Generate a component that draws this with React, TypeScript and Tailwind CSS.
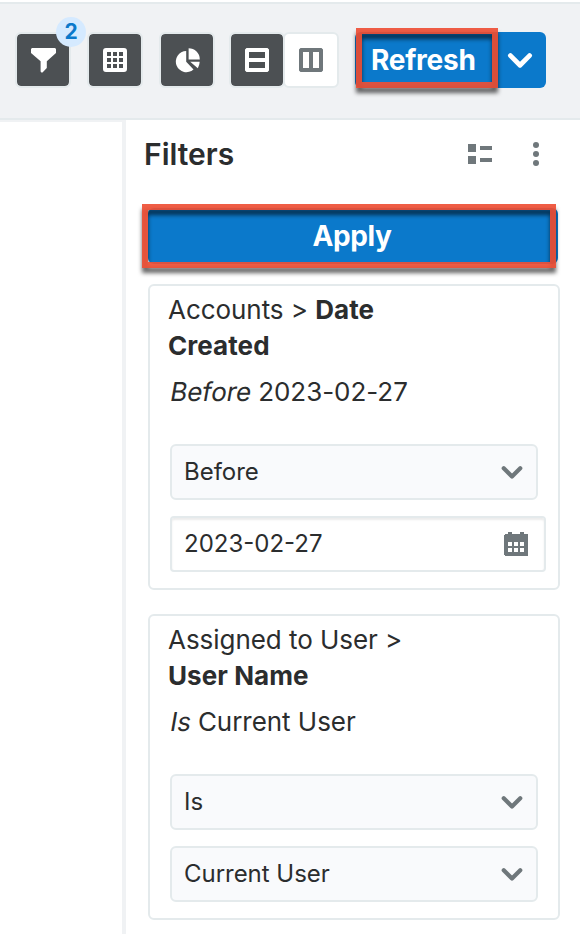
import type { ReactNode } from "react";

function Chevron({ className }: { className: string }) {
  return (
    <svg viewBox="0 0 24 16" className={className} fill="none" stroke="currentColor" strokeWidth="4.6" strokeLinecap="round" strokeLinejoin="round">
      <path d="M3 3.4 12 12.4 21 3.4" />
    </svg>
  );
}

function ToolButton({ light, children }: { light?: boolean; children: ReactNode }) {
  return (
    <button
      className={
        "relative flex size-14 shrink-0 items-center justify-center rounded-md border-2 border-[#e4eaec] " +
        (light ? "bg-white text-[#6f777b]" : "bg-[#4c5053] bg-clip-padding text-white")
      }
    >
      {children}
    </button>
  );
}

function Highlight({ className }: { className: string }) {
  return (
    <span
      className={
        "pointer-events-none absolute border-6 border-[#ee4f35]/92 drop-shadow-[0_5px_2px_rgba(0,0,0,0.65)] " + className
      }
    />
  );
}

function Select({ value }: { value: string }) {
  return (
    <div className="flex h-14 w-[368px] items-center justify-between rounded-md border-2 border-[#e4eaec] bg-[#f9fafc] pr-[13px] pl-3">
      <span className="text-[24px] leading-9 tracking-[-0.03px]">{value}</span>
      <Chevron className="h-[15px] w-[22px] text-[#6f777b]" />
    </div>
  );
}

function DateInput({ value }: { value: string }) {
  return (
    <div className="flex h-14 w-[376px] items-center justify-between rounded-[4px] border-2 border-[#e4eaec] bg-white pr-4 pl-3 shadow-[inset_0_2px_2px_rgba(0,0,0,0.08)]">
      <span className="text-[24px] leading-9">{value}</span>
      <svg viewBox="0 0 24 24" className="size-6" fill="#6f777b" shapeRendering="crispEdges">
        <path
          fillRule="evenodd"
          d="M1 2H4V0H8V2H16V0H20V2H23L24 3V23L23 24H1L0 23V3ZM4 10V14H8V10ZM10 10V14H14V10ZM16 10V14H20V10ZM4 16V20H8V16ZM10 16V20H14V16ZM16 16V20H20V16Z"
        />
      </svg>
    </div>
  );
}

function FilterCard({ path, field, operator, value, children }: {
  path: string;
  field: string;
  operator: string;
  value: string;
  children: ReactNode;
}) {
  return (
    <section className="h-[306px] w-[412px] rounded-md border-2 border-[#e4eaec] bg-white pt-[6px] pl-[18px]">
      <h3 className="w-[240px] text-[26px] leading-9 tracking-[-0.05px]">
        {`${path} > `}
        <b className="font-bold tracking-[0.06px]">{field}</b>
      </h3>
      <p className="mt-[10px] ml-[2px] text-[26px] leading-9 tracking-[-0.04px]">
        <em className="-ml-px mr-px inline-block origin-[0_75%] -skew-x-[10deg] not-italic">{operator}</em>
        {` ${value}`}
      </p>
      <div className="mt-[34px] ml-[2px] flex flex-col gap-4">{children}</div>
    </section>
  );
}

export default function App() {
  return (
    <div className="flex h-[934px] w-[580px] flex-col overflow-hidden bg-white pt-[2px] font-['Inter','Liberation_Sans',sans-serif] text-[#2b2d2e]">
      <header className="flex h-[118px] shrink-0 items-start border-y-2 border-[#e4eaec] bg-[#f0f2f4] pt-7 pl-[15px]">
        <div className="flex gap-4">
          <div className="relative">
            <ToolButton>
              <svg viewBox="0 0 25 25" className="size-[25px]" fill="currentColor">
                <path d="M1 0H24L25 1V5L15.8 13.2V20L11.5 24.4H10.4L9.6 23.6V13.2L0 5V1Z" />
              </svg>
            </ToolButton>
            <span className="absolute -top-[15px] left-[41px] flex size-[30px] items-center justify-center rounded-full bg-[#d5eaff] text-[21px] font-bold text-[#0b79cb]">
              2
            </span>
          </div>
          <ToolButton>
            <svg viewBox="0 0 24 24" className="size-6" fill="currentColor">
              <path
                fillRule="evenodd"
                d="M3 0H21Q24 0 24 3V21Q24 24 21 24H3Q0 24 0 21V3Q0 0 3 0ZM4 4V8H8V4ZM10 4V8H14V4ZM16 4V8H20V4ZM4 10V14H8V10ZM10 10V14H14V10ZM16 10V14H20V10ZM4 16V20H8V16ZM10 16V20H14V16ZM16 16V20H20V16Z"
              />
            </svg>
          </ToolButton>
          <ToolButton>
            <svg viewBox="0 0 25 25" className="size-[25px]" fill="currentColor">
              <path d="M11.2 3V13.8L18.5 21.5A10.6 10.6 0 1 1 11.2 3Z" />
              <path d="M13.6 0.2A11.2 11.2 0 0 1 24.8 11.4H13.6Z" />
              <path d="M15.2 13.7H24.7Q24.4 17.4 22.8 20.3Z" />
            </svg>
          </ToolButton>
        </div>
        <div className="ml-[14px] flex">
          <ToolButton>
            <svg viewBox="0 0 24 24" className="size-6" fill="currentColor">
              <path fillRule="evenodd" d="M1.5 0H22.5L24 1.5V22.5L22.5 24H1.5L0 22.5V1.5ZM4 4V10H20V4ZM4 14V20H20V14Z" />
            </svg>
          </ToolButton>
          <div className="-ml-[2px]">
            <ToolButton light>
              <svg viewBox="0 0 24 24" className="size-6" fill="currentColor">
                <path fillRule="evenodd" d="M1.5 0H22.5L24 1.5V22.5L22.5 24H1.5L0 22.5V1.5ZM4 4V20H10V4ZM14 4V20H20V4Z" />
              </svg>
            </ToolButton>
          </div>
        </div>
        <div className="relative ml-4 flex h-14 w-[191px] rounded-md bg-[#0b79cb] text-white">
          <button className="relative flex h-14 w-[143px] items-center pl-4 text-[28px] font-bold tracking-[-0.25px]">
            <Highlight className="-top-1 left-px h-[60px] w-[142px]" />
            <span className="relative">Refresh</span>
          </button>
          <button className="flex flex-1 items-center pl-[9px]">
            <Chevron className="h-[17px] w-[26px]" />
          </button>
        </div>
      </header>

      <main className="flex flex-1">
        <div className="h-full w-[126px] shrink-0 border-t-2 border-r-4 border-[#f0f2f4]" />
        <aside className="flex-1">
          <div className="flex h-[68px] items-center pl-[18px]">
            <h2 className="text-[30px] font-semibold">Filters</h2>
            <svg viewBox="0 0 24 20" className="ml-auto h-5 w-6" fill="#6f777b">
              <path d="M0 0H8V8H0ZM0 12H8V20H0ZM12 2H24V6H12ZM12 14H24V18H12Z" />
            </svg>
            <svg viewBox="0 0 6 24" className="mr-[41px] ml-[41px] h-6 w-[6px]" fill="#6f777b">
              <circle cx="3" cy="3" r="3" />
              <circle cx="3" cy="12" r="3" />
              <circle cx="3" cy="21" r="3" />
            </svg>
          </div>
          <button className="relative mt-5 ml-[22px] flex h-14 w-[410px] items-center justify-center rounded-md bg-[#0b79cb] text-[28px] font-bold tracking-[-0.4px] text-white">
            <Highlight className="-top-1 -left-[6px] h-16 w-[414px]" />
            <span className="relative -left-px">Apply</span>
          </button>
          <div className="mt-5 ml-[22px] flex flex-col gap-6">
            <FilterCard path="Accounts" field="Date Created" operator="Before" value="2023-02-27">
              <Select value="Before" />
              <DateInput value="2023-02-27" />
            </FilterCard>
            <FilterCard path="Assigned to User" field="User Name" operator="Is" value="Current User">
              <Select value="Is" />
              <Select value="Current User" />
            </FilterCard>
          </div>
        </aside>
      </main>
    </div>
  );
}
